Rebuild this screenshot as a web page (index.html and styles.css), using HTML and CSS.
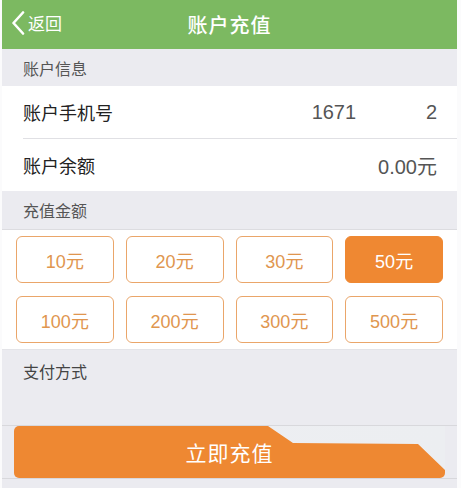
FILE: index.html
```html
<!DOCTYPE html>
<html lang="zh-CN">
<head>
    <meta charset="UTF-8">
    <meta name="viewport" content="width=device-width, initial-scale=1.0">
    <title>账户充值</title>
    <link rel="stylesheet" href="styles.css">
</head>
<body>

    <div class="page">
        <header class="nav-bar">
            <a class="nav-back" href="#">
                <svg width="14" height="24" viewBox="0 0 14 24">
                    <path d="M12 1.5 L2.5 12 L12 22.5" fill="none" stroke="#fff" stroke-width="2.6" stroke-linecap="round" stroke-linejoin="round"/>
                </svg>
                <span>返回</span>
            </a>
            <h1 class="nav-title">账户充值</h1>
        </header>

        <div class="section-title">账户信息</div>
        <div class="info-list">
            <div class="info-row">
                <span class="info-label">账户手机号</span>
                <span class="info-value">1671<span class="masked">000000</span>2</span>
            </div>
            <div class="info-row">
                <span class="info-label">账户余额</span>
                <span class="info-value">0.00元</span>
            </div>
        </div>

        <div class="section-title section-title-amount">充值金额</div>
        <div class="amount-grid">
            <button class="amount-btn">10元</button>
            <button class="amount-btn">20元</button>
            <button class="amount-btn">30元</button>
            <button class="amount-btn active">50元</button>
            <button class="amount-btn">100元</button>
            <button class="amount-btn">200元</button>
            <button class="amount-btn">300元</button>
            <button class="amount-btn">500元</button>
        </div>

        <div class="pay-section">
            <div class="pay-title">支付方式</div>
        </div>

        <div class="submit-bar">
            <button class="submit-btn">立即充值</button>
            <div class="submit-glare"></div>
        </div>
    </div>

    <script>
        document.querySelectorAll('.amount-btn').forEach(function(btn) {
            btn.addEventListener('click', function() {
                document.querySelector('.amount-btn.active').classList.remove('active');
                btn.classList.add('active');
            });
        });
    </script>

</body>
</html>
```

FILE: styles.css
```css
body {
    margin: 0;
    background-color: #fbfbfc;
    font-family: "Liberation Sans", "Noto Sans CJK SC", sans-serif;
    color: #333;
}

.page {
    width: 455px;
    height: 488px;
    margin-left: 2px;
    background-color: #ebebf0;
    overflow: hidden;
}

.nav-bar {
    position: relative;
    height: 49px;
    display: flex;
    align-items: center;
    justify-content: center;
    background-color: #7cb961;
}

.nav-back {
    position: absolute;
    left: 9px;
    top: 10px;
    display: flex;
    align-items: center;
    color: #fff;
    text-decoration: none;
    font-size: 17px;
}

.nav-back span {
    margin-left: 3px;
}

.nav-title {
    margin: 0;
    color: #fff;
    font-size: 20px;
    font-weight: 500;
    letter-spacing: 1px;
}

.section-title {
    height: 37px;
    display: flex;
    align-items: center;
    padding-left: 21px;
    font-size: 16px;
    color: #555;
}

.section-title-amount {
    height: 38px;
}

.info-list {
    background-color: #fff;
}

.info-row {
    height: 52px;
    margin-left: 21px;
    padding-right: 20px;
    display: flex;
    align-items: center;
    justify-content: space-between;
    font-size: 18px;
}

.info-row + .info-row {
    border-top: 1px solid #e0e0e4;
}

.info-label {
    color: #222;
}

.info-value {
    font-size: 20px;
    color: #555;
}

.masked {
    color: #fff;
    letter-spacing: 0.5px;
}

.amount-grid {
    display: grid;
    grid-template-columns: repeat(4, 1fr);
    gap: 13px 12px;
    padding: 6px 14px 6px;
    background-color: #fff;
    border-top: 1px solid #dcdce0;
}

.amount-btn {
    height: 47px;
    border: 1px solid #eaa66a;
    border-radius: 6px;
    background-color: #fff;
    color: #e0964f;
    font-family: inherit;
    font-size: 18px;
    cursor: pointer;
}

.amount-btn.active {
    background-color: #ef8832;
    border-color: #ef8832;
    color: #fff;
}

.pay-section {
    height: 75px;
    border-top: 1px solid #e4e4e8;
}

.pay-title {
    padding: 9px 0 0 21px;
    font-size: 16px;
    color: #444;
}

.submit-bar {
    position: relative;
    padding: 0 12px 0 12px;
    border-top: 1px solid #d8d8dc;
    border-bottom: 1px solid #d8d8dc;
}

.submit-btn {
    display: block;
    width: 431px;
    height: 52px;
    border: none;
    border-radius: 5px;
    background-color: #ee8832;
    color: #fff;
    font-family: inherit;
    font-size: 21px;
    letter-spacing: 1px;
    cursor: pointer;
}

.submit-glare {
    position: absolute;
    left: 12px;
    top: 0;
    width: 431px;
    height: 52px;
    background: linear-gradient(90deg, #f2d3b6 0%, #edeef2 30%, #eceef1 100%);
    clip-path: polygon(254px 0, 279px 17px, 404px 18px, 431px 44px, 431px 0);
}
```
